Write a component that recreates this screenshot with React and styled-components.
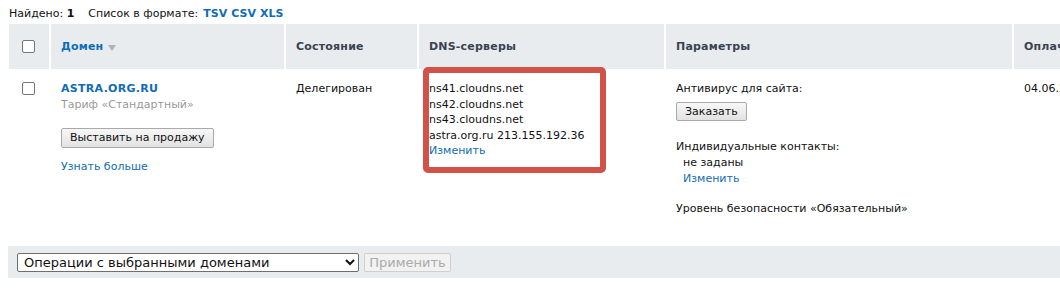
import React from "react";
import styled, {createGlobalStyle} from "styled-components";

const GlobalStyle = createGlobalStyle`
body {
  margin: 0;
  background: #fff;
  font-family: "DejaVu Sans", Verdana, sans-serif;
  font-size: 11px;
  color: #111;
  overflow: hidden;
}
`

const Page = styled.div`
width: 1060px;
height: 300px;
overflow: hidden;
`

const Found = styled.div`
display: flex;
align-items: center;
height: 15px;
padding: 6px 0 0 9px;
gap: 14px;
white-space: nowrap;
`

const Bold = styled.b`
font-weight: bold;
`

const Formats = styled.span`
display: inline-flex;
gap: 4px;
margin-left: 5px;
`

const FormatLink = styled.a`
color: #0f6cb6;
font-weight: bold;
text-decoration: none;
`

const Grid = styled.div`
display: grid;
grid-template-columns: 40px 233px 131px 245px 346px 120px;
column-gap: 2px;
margin: 3px 0 0 9px;
`

const HeadCell = styled.div`
background: #e8ecef;
height: 45px;
display: flex;
align-items: center;
padding-left: ${props => props.check ? '13px' : '10px'};
font-weight: bold;
color: #3b4350;
white-space: nowrap;
overflow: hidden;
letter-spacing: 0.2px;
`

const SortLink = styled.a`
color: #0f6cb6;
text-decoration: none;
display: flex;
align-items: center;
gap: 5px;
`

const SortArrow = styled.span`
display: inline-block;
border-left: 4px solid transparent;
border-right: 4px solid transparent;
border-top: 6px solid #aab5bd;
margin-top: 2px;
`

const Cell = styled.div`
position: relative;
padding: ${props => props.check ? '13px 0 14px 13px' : '12px 0 14px 10px'};
line-height: ${props => props.dense ? '15.5px' : '16px'};
white-space: nowrap;
overflow: ${props => props.clip ? 'hidden' : 'visible'};
`

const Box = styled.span`
display: inline-block;
width: 11px;
height: 11px;
border: 1px solid #767676;
border-radius: 2px;
background: #fff;
`

const DomainLink = styled.a`
display: block;
color: #0f6cb6;
font-weight: bold;
text-decoration: none;
letter-spacing: 0.3px;
`

const Muted = styled.div`
color: #999;
`

const Link = styled.a`
display: block;
color: #0f6cb6;
text-decoration: none;
`

const Button = styled.button`
display: block;
font-family: "DejaVu Sans", Verdana, sans-serif;
font-size: 11px;
height: ${props => props.tall ? '20px' : '19px'};
padding: 0 8px;
color: #111;
border: 1px solid #a9a9a9;
border-radius: 2px;
background: linear-gradient(#f7f7f7, #e2e2e2);
margin: ${props => props.margin || 0};
line-height: 16px;
`

const Highlight = styled.div`
position: absolute;
left: 4px;
top: -2px;
width: 171px;
height: 94px;
border: 6px solid #d2524a;
border-radius: 5px;
`

const Indent = styled.div`
padding-left: 7px;
`

const Gap = styled.div`
height: ${props => props.h}px;
`

const Footer = styled.div`
display: flex;
align-items: center;
gap: 5px;
height: 32px;
margin: 15px 0 0 8px;
padding-left: 9px;
background: #e8ecef;
`

const Select = styled.select`
width: 342px;
height: 19px;
font-family: "DejaVu Sans", Verdana, sans-serif;
font-size: 13px;
color: #111;
border: 1px solid #6f6f6f;
border-radius: 2px;
background: #fff;
padding: 0 2px;
`

const ApplyButton = styled.button`
height: 19px;
width: 87px;
font-family: "DejaVu Sans", Verdana, sans-serif;
font-size: 13px;
color: #aaa;
border: 1px solid #cfcfcf;
border-radius: 2px;
background: #f2f2f2;
padding: 0;
`

export default function App() {
    return (
        <Page>
            <GlobalStyle/>
            <Found>
                <span>Найдено: <Bold>1</Bold></span>
                <span>Список в формате:
                    <Formats>
                        <FormatLink>TSV</FormatLink>
                        <FormatLink>CSV</FormatLink>
                        <FormatLink>XLS</FormatLink>
                    </Formats>
                </span>
            </Found>
            <Grid>
                <HeadCell check><Box/></HeadCell>
                <HeadCell><SortLink>Домен <SortArrow/></SortLink></HeadCell>
                <HeadCell>Состояние</HeadCell>
                <HeadCell>DNS-серверы</HeadCell>
                <HeadCell>Параметры</HeadCell>
                <HeadCell>Оплачено до</HeadCell>

                <Cell check><Box/></Cell>
                <Cell>
                    <DomainLink>ASTRA.ORG.RU</DomainLink>
                    <Muted>Тариф «Стандартный»</Muted>
                    <Button tall margin="15px 0 11px 0">Выставить на продажу</Button>
                    <Link>Узнать больше</Link>
                </Cell>
                <Cell>Делегирован</Cell>
                <Cell dense>
                    <Highlight/>
                    <div>ns41.cloudns.net</div>
                    <div>ns42.cloudns.net</div>
                    <div>ns43.cloudns.net</div>
                    <div>astra.org.ru 213.155.192.36</div>
                    <Link>Изменить</Link>
                </Cell>
                <Cell>
                    <div>Антивирус для сайта:</div>
                    <Button margin="5px 0 18px 0">Заказать</Button>
                    <div>Индивидуальные контакты:</div>
                    <Indent>не заданы</Indent>
                    <Indent><Link>Изменить</Link></Indent>
                    <Gap h={14}/>
                    <div>Уровень безопасности «Обязательный»</div>
                </Cell>
                <Cell clip>04.06.2025</Cell>
            </Grid>
            <Footer>
                <Select defaultValue="ops">
                    <option value="ops">Операции с выбранными доменами</option>
                </Select>
                <ApplyButton disabled>Применить</ApplyButton>
            </Footer>
        </Page>
    );
}
